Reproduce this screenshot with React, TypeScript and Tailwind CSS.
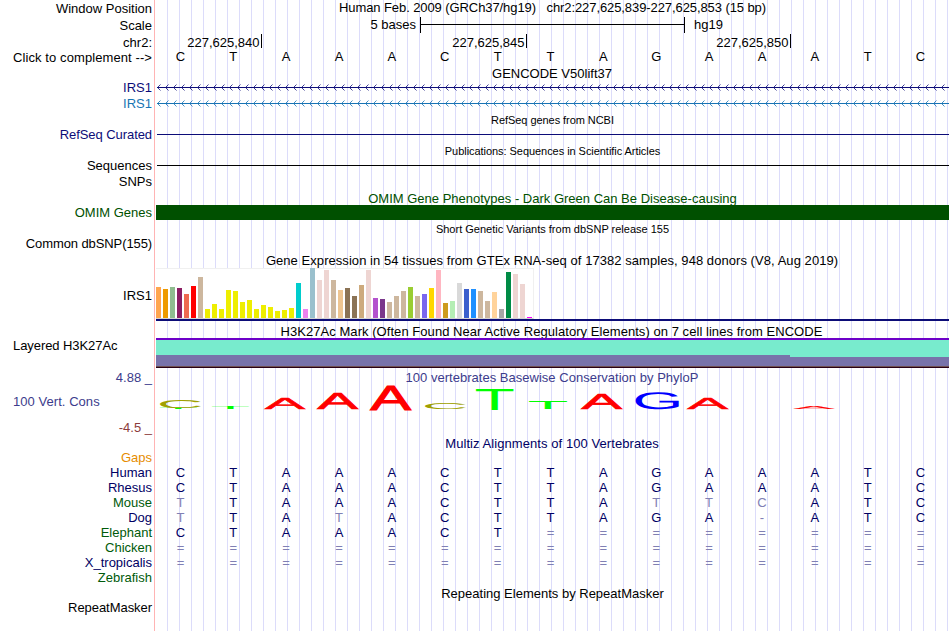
import clsx from "clsx"

const labels = [
  { text: "Window Position", style: "h-4 leading-[17px]" },
  { text: "Scale", style: "h-[18px] leading-5" },
  { text: "chr2:", style: "h-4 leading-[17px]" },
  { text: "Click to complement -->", style: "h-[15px] leading-[15px] tracking-[0.09px]" },
  { text: "IRS1", style: "mt-[14px] h-4 leading-[17px] text-[#0c0c78]" },
  { text: "IRS1", style: "h-4 leading-[17px] text-[#1874b4]" },
  { text: "RefSeq Curated", style: "mt-4 h-[15px] leading-[15px] tracking-[-0.07px] text-[#0c0c78]" },
  { text: "Sequences", style: "mt-4 h-[15px] leading-[15px]" },
  { text: "SNPs", style: "h-4 leading-[17px]" },
  { text: "OMIM Genes", style: "mt-4 h-[15px] leading-[15px] text-[#005000]" },
  { text: "Common dbSNP(155)", style: "mt-4 h-[15px] leading-[15px] tracking-[-0.1px]" },
  { text: "IRS1", style: "mt-[37px] h-[15px] leading-[15px]" },
  { text: "Layered H3K27Ac", style: "mt-[35px] h-[15px] pl-[13px] text-left leading-[15px] tracking-[-0.07px]" },
  { text: "4.88 _", style: "mt-[17px] h-[15px] leading-[15px] text-[#3c3c8c]" },
  { text: "100 Vert. Cons", style: "mt-[9px] h-[15px] pl-[13px] text-left leading-[15px] tracking-[0.05px] text-[#3c3c8c]" },
  { text: "-4.5 _", style: "mt-[11px] h-[15px] leading-[15px] text-[#8c3c3c]" },
  { text: "Gaps", style: "mt-[15px] h-[15px] leading-[15px] text-[#e68c00]" },
  { text: "Human", style: "h-[15px] leading-[15px] text-[#000064]" },
  { text: "Rhesus", style: "h-[15px] leading-[15px] text-[#000064]" },
  { text: "Mouse", style: "h-[15px] leading-[15px] text-[#005a0a]" },
  { text: "Dog", style: "h-[15px] leading-[15px] text-[#000064]" },
  { text: "Elephant", style: "h-[15px] leading-[15px] text-[#005a0a]" },
  { text: "Chicken", style: "h-[15px] leading-[15px] text-[#005a0a]" },
  { text: "X_tropicalis", style: "h-[15px] leading-[15px] text-[#000064]" },
  { text: "Zebrafish", style: "h-[15px] leading-[15px] text-[#005a0a]" },
  { text: "RepeatMasker", style: "mt-[15px] h-[15px] leading-[15px] tracking-[-0.05px]" },
]

const reference = "CTAAACTTAGAAATC"

const alignments = [
  reference,
  reference,
  "TTAAACTTATTCATC",
  "TTATACTTAGA-ATC",
  "CTAAACT========",
  "===============",
  "===============",
]

// [color, height] for each GTEx tissue
const tissues: [string, number][] = [
  ["#ffa54f", 31], ["#ee9a00", 29], ["#8fbc8f", 31], ["#8b1c62", 30], ["#ee6a50", 24], ["#ff0000", 32],
  ["#cdb79e", 41], ["#eeee00", 9], ["#eeee00", 14], ["#eeee00", 9], ["#eeee00", 28], ["#eeee00", 27],
  ["#eeee00", 16], ["#eeee00", 18], ["#eeee00", 9], ["#eeee00", 13], ["#eeee00", 11], ["#eeee00", 7],
  ["#eeee00", 8], ["#eeee00", 10], ["#00cdcd", 35], ["#ee82ee", 9], ["#9ac0cd", 50], ["#eed5d2", 38],
  ["#eed5d2", 48], ["#cdb79e", 38], ["#eec591", 28], ["#8b7355", 30], ["#8b7355", 22], ["#cdaa7d", 33],
  ["#eed5d2", 48], ["#b452cd", 20], ["#7a378b", 19], ["#cdb79e", 16], ["#cdb79e", 22], ["#cdb79e", 27],
  ["#9acd32", 31], ["#cdb79e", 22], ["#7a67ee", 24], ["#ffd700", 30], ["#ffb6c1", 48], ["#cd9b1d", 15],
  ["#b4eeb4", 17], ["#d9d9d9", 35], ["#3a5fcd", 29], ["#1e90ff", 29], ["#cdb79e", 27], ["#cdb79e", 17],
  ["#ffd39b", 26], ["#a6a6a6", 9], ["#008b45", 46], ["#eed5d2", 44], ["#eed5d2", 34], ["#ff00ff", 1],
]

// glyph box at font-size 100: left, width, ascent, descent
const glyphs: Record<string, [number, number, number, number]> = {
  A: [0.3, 66.1, 68.8, 0],
  C: [5, 63.5, 69.9, 1],
  G: [5, 66, 69.9, 1],
  T: [2.2, 56.7, 68.8, 0],
}

// conservation letters: x, top, width, height inside the track
const logo = [
  { base: "T", x: 4, y: 22.5, w: 37, h: 1.5, color: "#00ff00" },
  { base: "C", x: 4, y: 15, w: 41, h: 8, color: "#a0a000" },
  { base: "T", x: 56, y: 21, w: 37, h: 3, color: "#00ff00" },
  { base: "A", x: 109, y: 13, w: 40, h: 11, color: "#ff0000" },
  { base: "A", x: 161.5, y: 8, w: 40.5, h: 16, color: "#ff0000" },
  { base: "A", x: 214.5, y: 1, w: 40.5, h: 24, color: "#ff0000" },
  { base: "C", x: 269, y: 18, w: 41, h: 6, color: "#a0a000" },
  { base: "T", x: 320, y: 4, w: 37.5, h: 21, color: "#00ff00" },
  { base: "T", x: 373, y: 16, w: 38, h: 8, color: "#00ff00" },
  { base: "A", x: 425.5, y: 9, w: 40.5, h: 15, color: "#ff0000" },
  { base: "G", x: 479.5, y: 7, w: 43.5, h: 17, color: "#0000ff" },
  { base: "A", x: 531.5, y: 13, w: 40.5, h: 11, color: "#ff0000" },
  { base: "A", x: 638, y: 21, w: 40, h: 3, color: "#ff0000" },
]

function Title({ text, className }: { text: string; className: string }) {
  return <div className={clsx("flex shrink-0 justify-center whitespace-pre", className)}>{text}</div>
}

function Bases({ seq, className, match }: { seq: string; className?: string; match?: boolean }) {
  return (
    <div className={clsx("-ml-0.5 grid h-[15px] w-[793px] shrink-0 grid-cols-15 text-center leading-[15px]", className)}>
      {seq.split("").map((base, i) => (
        <span key={i} className={match ? (base === reference[i] ? "text-[#000064]" : "text-[#8080b4]") : "text-black"}>
          {base}
        </span>
      ))}
    </div>
  )
}

function Transcript({ color }: { color: string }) {
  const arrows = Array.from({ length: 99 }, (_, i) => 1.5 + i * 8)
  return (
    <svg className="block h-4 w-full shrink-0" viewBox="0 0 793 16" fill="none" stroke={color}>
      <path d="M1 8.5H793" />
      {arrows.map((x) => (
        <path key={x} strokeWidth="0.8" d={`M${x + 3} 5.5L${x} 8.5L${x + 3} 11.5`} />
      ))}
    </svg>
  )
}

function Tick({ text, className }: { text: string; className: string }) {
  return (
    <div className={clsx("flex h-[14px] justify-end border-r border-black pr-[1.5px] leading-[17px]", className)}>{text}</div>
  )
}

export default function App() {
  return (
    <main className="flex h-[631px] w-[950px] overflow-hidden bg-white font-['Liberation_Sans',Arial,sans-serif] text-[13px] text-black">
      <aside className="flex w-[155px] shrink-0 flex-col border-r border-[#ffb4b4] pr-0.5 text-right whitespace-nowrap">
        {labels.map((label, i) => (
          <div key={i} className={clsx("shrink-0", label.style)}>{label.text}</div>
        ))}
      </aside>

      <section className="ml-px flex w-[793px] flex-col bg-[linear-gradient(to_right,#dcdcfa_1px,transparent_1px)] bg-[length:12px_100%] bg-[position:11px_0]">
        <Title text="Human Feb. 2009 (GRCh37/hg19)   chr2:227,625,839-227,625,853 (15 bp)" className="h-[15px] leading-[15px] tracking-[-0.087px]" />
        <div className="mt-[2px] flex h-4 shrink-0 leading-4">
          <span className="w-[264px] pr-1 text-right">5 bases</span>
          <div className="flex w-[265px] items-center border-x border-black">
            <div className="-mt-px h-px w-full bg-black" />
          </div>
          <span className="pl-[9px]">hg19</span>
        </div>
        <div className="mt-px flex h-[15px] shrink-0">
          <Tick text="227,625,840" className="w-[106px]" />
          <Tick text="227,625,845" className="w-[265px]" />
          <Tick text="227,625,850" className="w-[264px]" />
        </div>
        <Bases seq={reference} />

        {/* Genes */}
        <Title text="GENCODE V50lift37" className="mt-[2px] h-[13px] pr-px leading-[15px]" />
        <Transcript color="#0c0c78" />
        <Transcript color="#1874b4" />
        <Title text="RefSeq genes from NCBI" className="mt-0.5 h-[15px] text-[11px] leading-[15px] tracking-[-0.06px]" />
        <div className="mt-[6px] ml-px h-px shrink-0 bg-[#0c0c78]" />
        <Title text="Publications: Sequences in Scientific Articles" className="mt-[9px] h-[15px] text-[11px] leading-[15px] tracking-[-0.05px]" />
        <div className="mt-[6px] ml-px h-px shrink-0 bg-black" />

        {/* Variants */}
        <Title text="OMIM Gene Phenotypes - Dark Green Can Be Disease-causing" className="mt-[25px] h-[14px] leading-[15px] text-[#005000]" />
        <div className="h-[15px] shrink-0 bg-[#005000]" />
        <Title text="Short Genetic Variants from dbSNP release 155" className="mt-[2px] h-[15px] text-[11px] leading-[15px]" />

        {/* Expression */}
        <Title text="Gene Expression in 54 tissues from GTEx RNA-seq of 17382 samples, 948 donors (V8, Aug 2019)" className="mt-4 h-[15px] pr-px leading-[15px] tracking-[0.055px]" />
        <div className="flex h-[51px] w-[378px] shrink-0 items-end gap-0.5 border-t border-r border-b border-t-[#f0f0f0] border-r-[#f0f0f0] border-b-[#d2d2d2] bg-white">
          {tissues.map(([color, height], i) => (
            <div key={i} className="w-[5px] shrink-0" style={{ backgroundColor: color, height }} />
          ))}
        </div>
        <div className="h-0.5 shrink-0 bg-[#0c0c78]" />

        {/* Regulation */}
        <Title text="H3K27Ac Mark (Often Found Near Active Regulatory Elements) on 7 cell lines from ENCODE" className="mt-[3px] h-[14px] pr-0.5 leading-[15px] tracking-[0.05px]" />
        <div className="flex h-[30px] shrink-0 flex-col border-t-2 border-b border-t-[#6e00c8] border-b-[#280014] bg-[#78ebcd]">
          <div className="mt-auto flex h-[11px] items-end">
            <div className="h-[11px] w-[634px] bg-[#7873aa]" />
            <div className="h-[9px] flex-1 bg-[#7873aa]" />
          </div>
          <div className="h-px bg-[#6e5050]" />
        </div>

        {/* Conservation */}
        <Title text="100 vertebrates Basewise Conservation by PhyloP" className="mt-[2px] h-[15px] pr-px leading-[15px] tracking-[0.02px] text-[#3c3c8c]" />
        <svg className="block h-[26px] w-full shrink-0 overflow-visible" viewBox="0 0 793 26" fontSize="100" textRendering="geometricPrecision">
          {logo.map(({ base, x, y, w, h, color }) => {
            const [left, width, ascent, descent] = glyphs[base]
            const sx = w / width
            const sy = h / (ascent + descent)
            return (
              <text
                key={`${base}${x}`}
                fill={color}
                stroke={color}
                strokeWidth={base === "A" ? 2.5 : 0}
                transform={`translate(${x - left * sx} ${y + ascent * sy}) scale(${sx} ${sy})`}
              >
                {base}
              </text>
            )
          })}
        </svg>
        <Title text="Multiz Alignments of 100 Vertebrates" className="mt-[25px] h-[15px] pr-px leading-[15px] tracking-[0.07px] text-[#000064]" />
        <div className="mt-[14px] shrink-0">
          {alignments.map((seq, i) => (
            <Bases key={i} seq={seq} match />
          ))}
        </div>
        <Title text="Repeating Elements by RepeatMasker" className="mt-4 h-[15px] leading-[15px]" />
      </section>
    </main>
  )
}
